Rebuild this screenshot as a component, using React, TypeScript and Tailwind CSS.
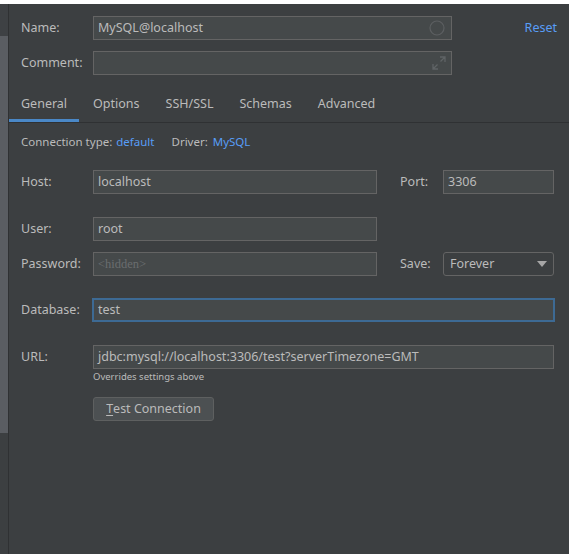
import React from 'react';

const font = { fontFamily: '"Noto Sans", "Noto Sans CJK SC", sans-serif' };

function Field({ className = '', children }: { className?: string; children?: React.ReactNode }) {
  return (
    <div
      className={`shrink-0 h-[24px] flex items-center px-[4px] bg-[#45494a] border border-[#646464] text-[12.5px] text-[#bbbbbb] ${className}`}
    >
      {children}
    </div>
  );
}

function Label({ children }: { children: React.ReactNode }) {
  return <div className="w-[72px] shrink-0 text-[12.5px] text-[#bbbbbb]">{children}</div>;
}

function SideLabel({ children }: { children: React.ReactNode }) {
  return <div className="ml-[23px] w-[43px] shrink-0 text-[12.5px] text-[#bbbbbb]">{children}</div>;
}

export default function App() {
  const tabs = ['General', 'Options', 'SSH/SSL', 'Schemas', 'Advanced'];

  return (
    <div className="w-[569px] h-[554px] flex flex-col bg-[#3c3f41] overflow-hidden" style={font}>
      <div className="h-[4px] bg-white shrink-0" />
      <div className="flex flex-1 min-h-0">
        {/* left strip */}
        <div className="w-[9px] shrink-0 flex flex-col border-r border-[#2f3133] bg-[#3a3d40]">
          <div className="h-[32px] bg-[#3e4144]" />
          <div className="h-[397px] bg-[#5a5d62]" />
          <div className="flex-1 bg-[#3c3f41]" />
        </div>

        <div className="flex-1 min-w-0 flex flex-col">
          {/* name */}
          <div className="flex items-center pl-[12px] mt-[12px]">
            <Label>Name:</Label>
            <Field className="w-[359px] justify-between">
              <span>MySQL@localhost</span>
              <svg width="16" height="16" viewBox="0 0 16 16" className="mr-[2px]">
                <circle cx="8" cy="8" r="7" fill="none" stroke="#5c5f61" strokeWidth="1.2" />
              </svg>
            </Field>
            <div className="ml-auto mr-[12px] text-[12.5px] text-[#589df6]">Reset</div>
          </div>

          {/* comment */}
          <div className="flex items-center pl-[12px] mt-[11px]">
            <Label>Comment:</Label>
            <Field className="w-[359px] justify-end">
              <svg width="14" height="14" viewBox="0 0 14 14" className="mr-[1px]">
                <path d="M8 1h5v5M13 1L8.5 5.5" fill="none" stroke="#5f6365" strokeWidth="1.3" />
                <path d="M1 8v5h5M1 13l4.5-4.5" fill="none" stroke="#5f6365" strokeWidth="1.3" />
              </svg>
            </Field>
          </div>

          {/* tabs */}
          <div className="flex mt-[14px] border-b border-[#2f3133] h-[34px]">
            {tabs.map((t, i) => (
              <div
                key={t}
                className={`flex items-center px-[12px] mr-[2px] text-[12.5px] text-[#bbbbbb] border-b-[3px] ${
                  i === 0 ? 'border-[#4a88c7]' : 'border-transparent'
                }`}
              >
                {t}
              </div>
            ))}
          </div>

          {/* connection info */}
          <div className="flex items-center pl-[12px] mt-[11px] text-[11.5px] h-[16px]">
            <span className="text-[#bbbbbb]">Connection type:</span>
            <span className="text-[#589df6] ml-[4px]">default</span>
            <span className="text-[#bbbbbb] ml-[17px]">Driver:</span>
            <span className="text-[#589df6] ml-[5px]">MySQL</span>
          </div>

          {/* host */}
          <div className="flex items-center pl-[12px] mt-[20px]">
            <Label>Host:</Label>
            <Field className="w-[284px]">localhost</Field>
            <SideLabel>Port:</SideLabel>
            <Field className="w-[111px]">3306</Field>
          </div>

          {/* user */}
          <div className="flex items-center pl-[12px] mt-[23px]">
            <Label>User:</Label>
            <Field className="w-[284px]">root</Field>
          </div>

          {/* password */}
          <div className="flex items-center pl-[12px] mt-[11px]">
            <Label>Password:</Label>
            <Field className="w-[284px]">
              <span className="text-[12.5px] text-[#6a6d6f]" style={{ fontFamily: '"Liberation Serif", serif' }}>
                &lt;hidden&gt;
              </span>
            </Field>
            <SideLabel>Save:</SideLabel>
            <div className="shrink-0 w-[111px] h-[24px] flex items-center justify-between pl-[6px] pr-[6px] border border-[#646464] rounded-[3px] bg-[#3c3f41] text-[12.5px] text-[#bbbbbb]">
              <span>Forever</span>
              <svg width="10" height="6" viewBox="0 0 10 6">
                <path d="M0 0h10L5 6z" fill="#a6a6a6" />
              </svg>
            </div>
          </div>

          {/* database */}
          <div className="flex items-center pl-[12px] mt-[22px]">
            <div className="w-[71px] shrink-0 text-[12.5px] text-[#bbbbbb]">Database:</div>
            <div className="shrink-0 w-[463px] h-[24px] flex items-center px-[4px] bg-[#45494a] border-2 border-[#3d6a94] text-[12.5px] text-[#bbbbbb]">
              test
            </div>
          </div>

          {/* url */}
          <div className="flex items-center pl-[12px] mt-[23px]">
            <Label>URL:</Label>
            <Field className="w-[461px]">jdbc:mysql://localhost:3306/test?serverTimezone=GMT</Field>
          </div>
          <div className="pl-[84px] mt-[1px] text-[9.5px] text-[#bbbbbb] leading-[14px]">Overrides settings above</div>

          {/* test button */}
          <div className="pl-[84px] mt-[13px]">
            <button className="w-[121px] h-[24px] rounded-[3px] bg-[#4c5052] border border-[#5e6060] text-[12.5px] text-[#bbbbbb] flex items-center justify-center">
              <span className="underline underline-offset-2">T</span>est Connection
            </button>
          </div>
        </div>
      </div>
    </div>
  );
}
